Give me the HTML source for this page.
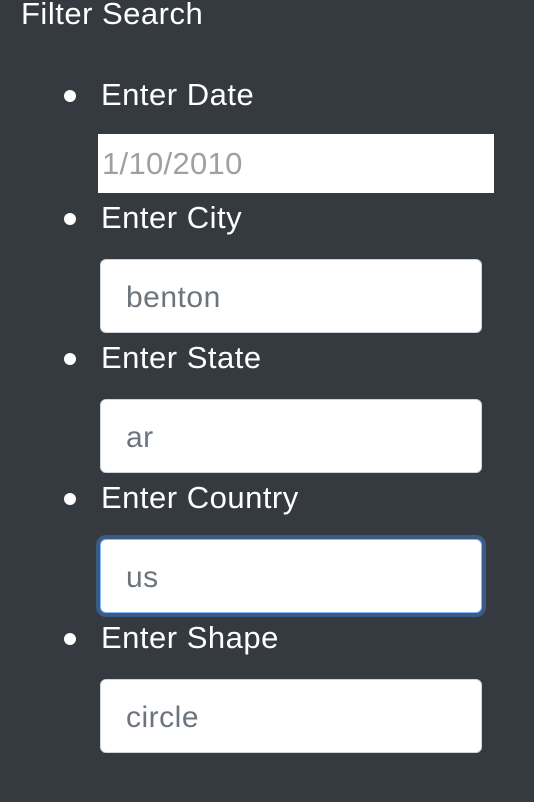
<!DOCTYPE html>
<html><head><style>
html,body{margin:0;padding:0;width:534px;height:802px;background:#343a40;overflow:hidden;font-family:"Liberation Sans",Arial,sans-serif;}
.t{position:absolute;color:#fff;font-size:31px;letter-spacing:0.5px;line-height:34px;white-space:nowrap;}
.b{position:absolute;left:64px;width:12px;height:12px;border-radius:50%;background:#fff;}
.in{position:absolute;left:100px;width:382px;height:74px;background:#fff;border:1px solid #ced4da;border-radius:6px;box-sizing:border-box;color:#6c757d;font-size:30px;letter-spacing:0.5px;line-height:76px;padding-left:25px;}
.date{position:absolute;left:98px;top:134px;width:396px;height:59px;background:#fff;color:#a0a0a0;font-size:31px;letter-spacing:0.3px;line-height:60px;padding-left:4px;box-sizing:border-box;}
</style></head><body>
<div class="t" style="left:21px;top:-3px">Filter Search</div>
<div class="b" style="top:90px"></div><div class="t" style="left:101px;top:78px">Enter Date</div>
<div class="date">1/10/2010</div>
<div class="b" style="top:213px"></div><div class="t" style="left:101px;top:201px">Enter City</div>
<div class="in" style="top:259px">benton</div>
<div class="b" style="top:353px"></div><div class="t" style="left:101px;top:341px">Enter State</div>
<div class="in" style="top:399px">ar</div>
<div class="b" style="top:493px"></div><div class="t" style="left:101px;top:481px">Enter Country</div>
<div class="in" style="top:539px;border-color:#80bdff;box-shadow:0 0 0 4px #3d5a85;">us</div>
<div class="b" style="top:633px"></div><div class="t" style="left:101px;top:621px">Enter Shape</div>
<div class="in" style="top:679px">circle</div>
</body></html>
